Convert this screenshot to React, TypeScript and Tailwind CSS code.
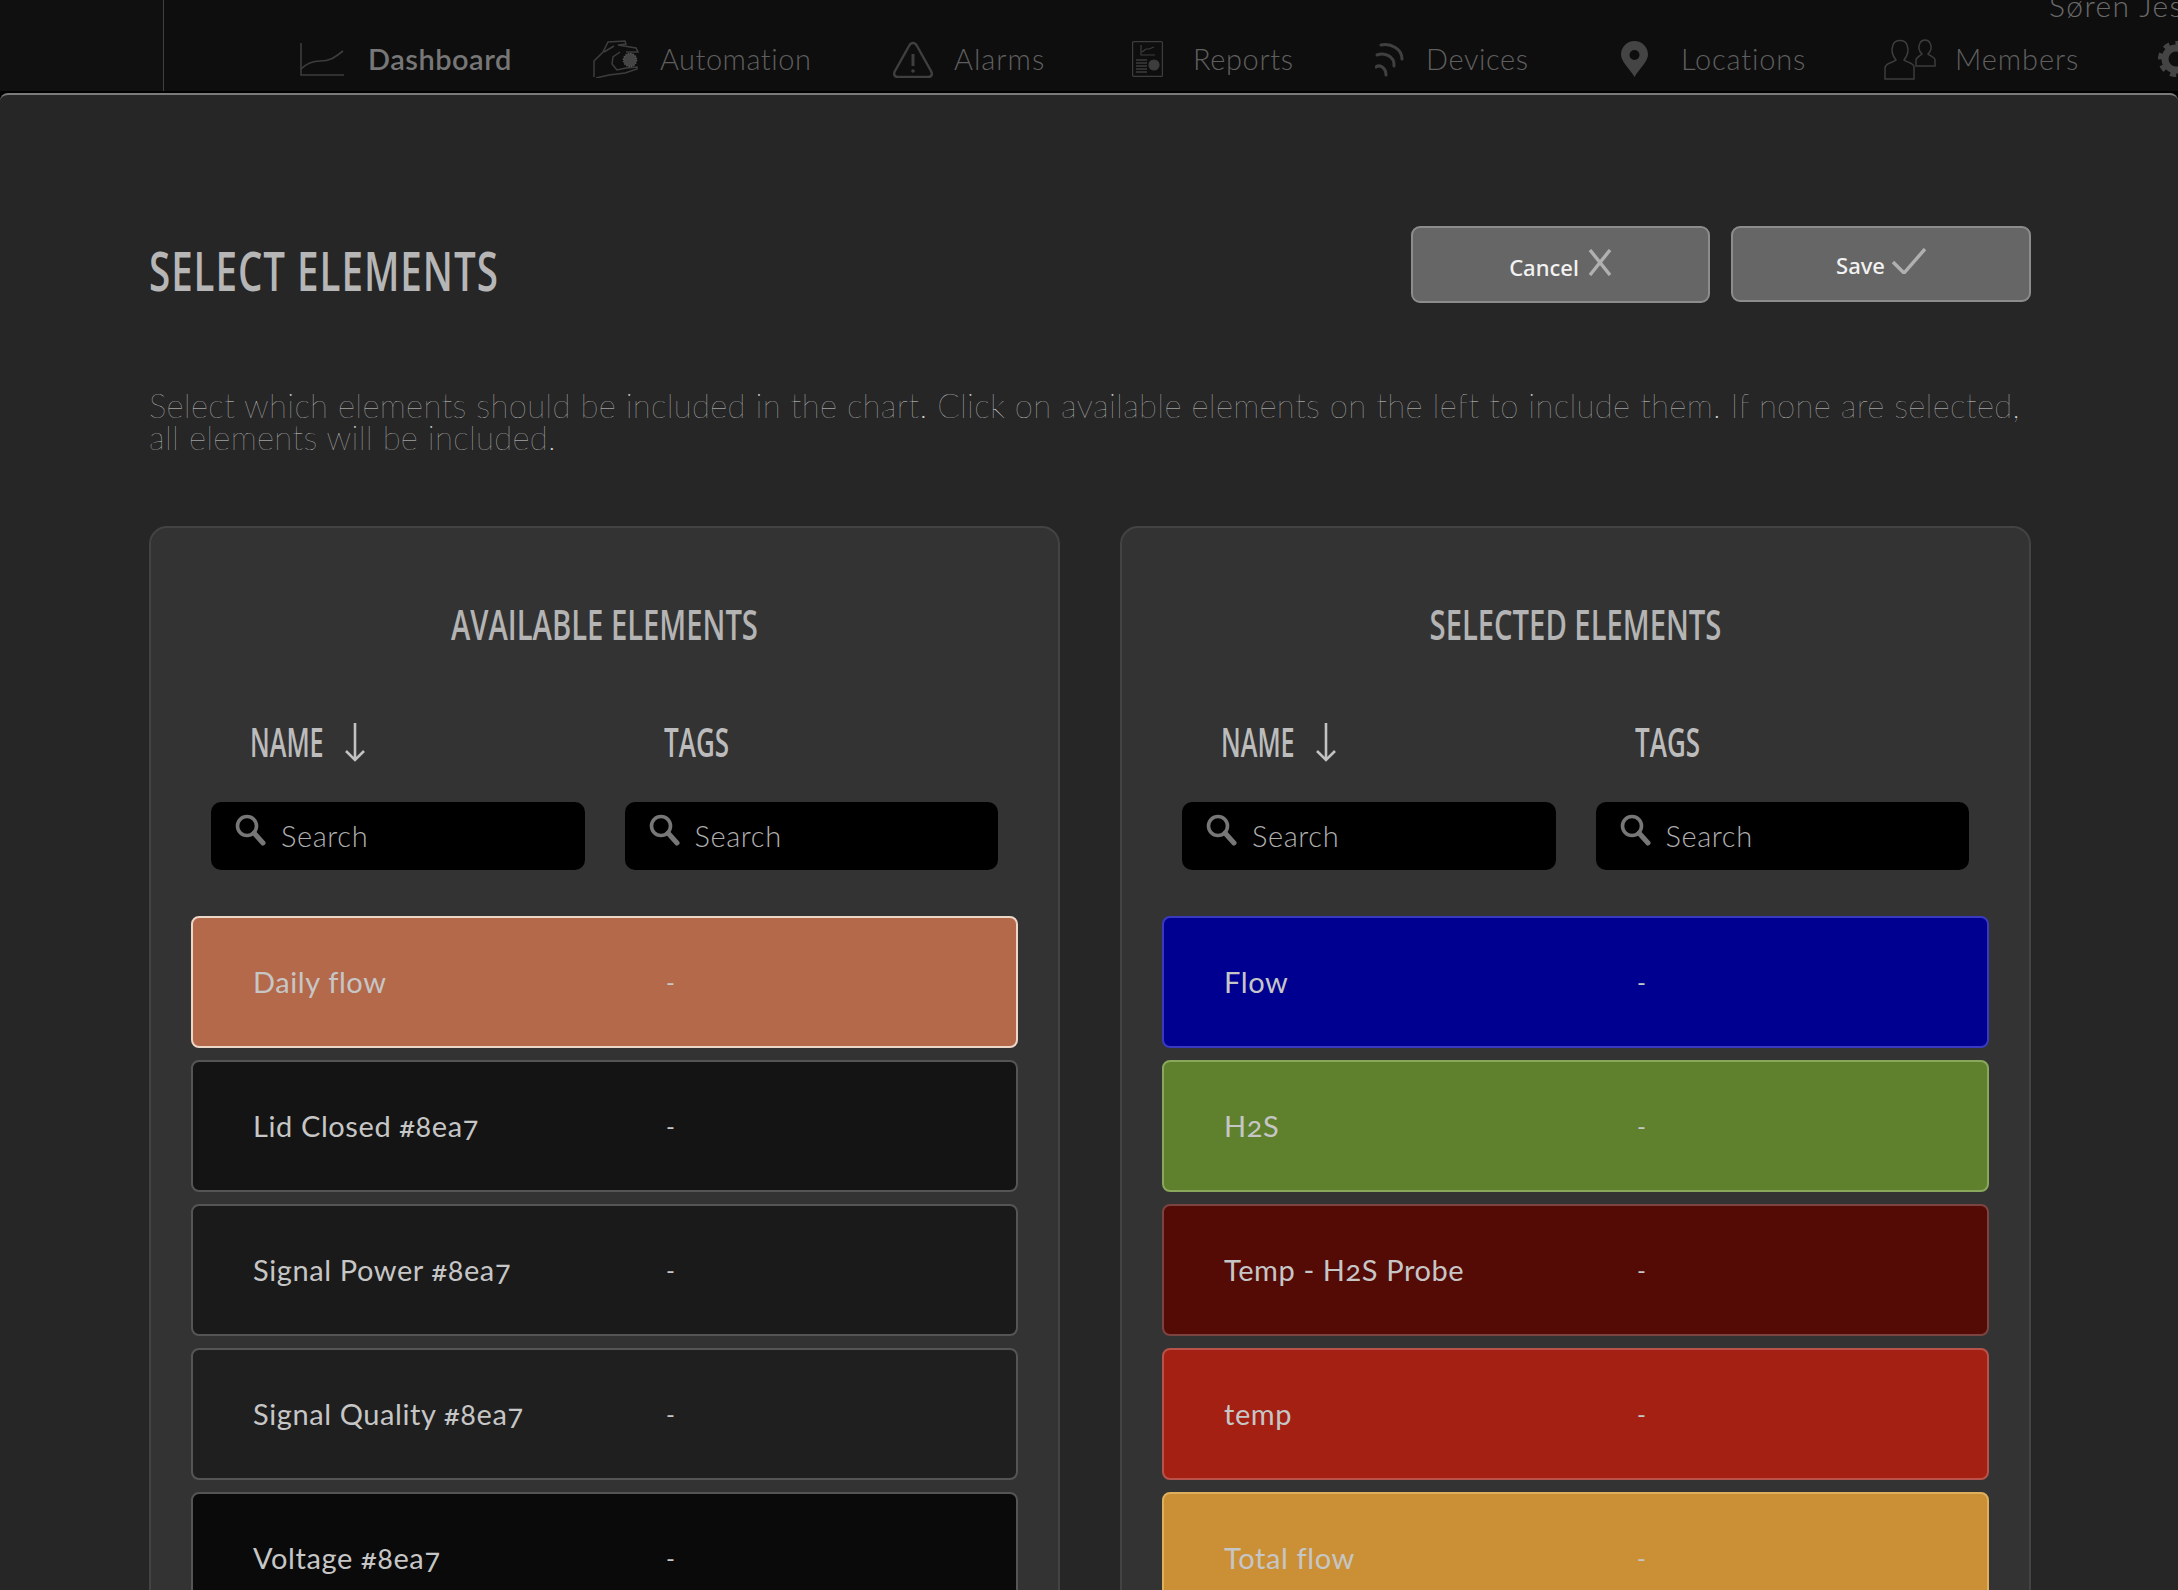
import React from "react";

function DashIcon() {
  return (
    <svg width="44" height="33" viewBox="0 0 44 33" fill="none" stroke="#3d3d3d" strokeWidth="1.6">
      <path d="M1 0V32H44" />
      <path d="M1 26C6 21 13 18 20 18C31 18 35 14 43 8" />
    </svg>
  );
}
function AutoIcon() {
  return (
    <svg width="48" height="38" viewBox="0 0 48 38" fill="none" stroke="#3d3d3d" strokeWidth="1.5">
      <path d="M1 37V21L10 12L15 2L32 1L33 4L25 5L43 8L45 12L33 12" />
      <path d="M11 12L21 6M27 12L20 17L19 24L24 30L33 28L44 27V29L32 33L16 35L3 38" />
      <circle cx="37" cy="20" r="6.5" fill="#444" stroke="#555" strokeDasharray="1.5 1" />
    </svg>
  );
}
function AlarmIcon() {
  return (
    <svg width="40" height="37" viewBox="0 0 40 37" fill="none" stroke="#3f3f3f" strokeWidth="2.4" strokeLinejoin="round">
      <path d="M20 2C18 2 17 3 16 5L2 30C0 34 2 36 5 36H35C38 36 40 34 38 30L24 5C23 3 22 2 20 2Z" />
      <path d="M20 13V25" strokeWidth="3" />
      <circle cx="20" cy="30" r="1.8" fill="#3f3f3f" stroke="none" />
    </svg>
  );
}
function ReportIcon() {
  return (
    <svg width="31" height="36" viewBox="0 0 31 36" fill="none" stroke="#3d3d3d" strokeWidth="1.2">
      <rect x="0.6" y="0.6" width="29.8" height="34.8" rx="1" />
      <path d="M9 4V14H23M10 11L14 8H17L22 6" />
      <path d="M4 19H15M4 22H15M4 25H15M4 28H15M4 31H15" strokeWidth="1.4" />
      <circle cx="22" cy="24" r="5" fill="#3d3d3d" />
    </svg>
  );
}
function WifiIcon() {
  return (
    <svg width="29" height="35" viewBox="0 0 29 35" fill="none" stroke="#404040" strokeWidth="3" strokeLinecap="round">
      <path d="M6 3C16 1 27 7 27 17" />
      <path d="M2 13C9 10 20 14 19 24" />
      <path d="M1 25C5 22 11 26 11 33" />
    </svg>
  );
}
function PinIcon() {
  return (
    <svg width="27" height="36" viewBox="0 0 27 36">
      <path fillRule="evenodd" fill="#444" d="M13.5 0C6 0 0 6 0 13.5C0 21 9 28 13.5 36C18 28 27 21 27 13.5C27 6 21 0 13.5 0ZM13.5 9A5 5 0 1 1 13.5 19A5 5 0 1 1 13.5 9Z" />
    </svg>
  );
}
function MembersIcon() {
  return (
    <svg width="52" height="41" viewBox="0 0 52 41" fill="none" stroke="#3d3d3d" strokeWidth="1.5">
      <path d="M1 40H30V28C30 24 22 23 20 21C24 16 25 11 23 6C21 0 11 0 9 6C7 11 8 16 12 21C9 24 1 24 1 29Z" />
      <path d="M32 27H51V21C51 18 46 17 44 15C47 12 48 8 46 4C44 0 38 0 36 4C34 8 35 12 38 15C36 17 32 18 32 21Z" />
    </svg>
  );
}
function GearIcon() {
  return (
    <svg width="36" height="36" viewBox="0 0 36 36" fill="none" stroke="#444" className="shrink-0">
      <circle cx="18" cy="18" r="11" strokeWidth="7" />
      <circle cx="18" cy="18" r="15.5" strokeWidth="5" strokeDasharray="6 6" />
    </svg>
  );
}

const nav = [
  { t: "Dashboard", I: DashIcon, w: "w-[293px]", o: "w-[68px]", c: "text-[#777777] font-semibold" },
  { t: "Automation", I: AutoIcon, w: "w-[300px]", o: "w-[67px]", c: "text-[#5f5f5f] font-light tracking-[0.5px]" },
  { t: "Alarms", I: AlarmIcon, w: "w-[239px]", o: "w-[61px]", c: "text-[#5f5f5f] font-light tracking-[1px]" },
  { t: "Reports", I: ReportIcon, w: "w-[243px]", o: "w-[61px]", c: "text-[#5f5f5f] font-light tracking-[0.6px]" },
  { t: "Devices", I: WifiIcon, w: "w-[246px]", o: "w-[51px]", c: "text-[#5f5f5f] font-light tracking-[0.6px]" },
  { t: "Locations", I: PinIcon, w: "w-[263px]", o: "w-[60px]", c: "text-[#5f5f5f] font-light tracking-[0.8px]" },
  { t: "Members", I: MembersIcon, w: "w-[274px]", o: "w-[71px]", c: "text-[#5f5f5f] font-light tracking-[0.9px]" },
];

function Mag() {
  return (
    <svg width="31" height="32" viewBox="0 0 31 32" fill="none" stroke="#777777" className="shrink-0">
      <circle cx="12" cy="12" r="9.5" strokeWidth="3.6" />
      <path d="M19 19L28 29" strokeWidth="5" strokeLinecap="round" />
    </svg>
  );
}

function Arrow() {
  return (
    <svg width="20" height="39" viewBox="0 0 20 39" fill="none" stroke="#c2c2c2" strokeWidth="2.6">
      <path d="M10 0V36" />
      <path d="M1 28L10 37L19 28" />
    </svg>
  );
}

function SearchBox() {
  return (
    <div className="flex h-[68px] items-start gap-[15px] rounded-[10px] bg-black pl-[24px] pt-[12px]">
      <Mag />
      <span className="mt-[4px] font-['Lato'] text-[29px] leading-[36px] font-light tracking-[0.6px] text-[#b0b0b0]">Search</span>
    </div>
  );
}

type R = { n: string; bg: string };

function Panel({ title, rows }: { title: string; rows: R[] }) {
  return (
    <div className="rounded-[18px] border-2 border-[#434343] bg-[#333333] px-[40px] pt-[73px]">
      <h2 className="origin-center scale-x-[0.695] text-center font-['Open_Sans'] text-[42px] leading-[46px] font-semibold text-[#b4b4b4] uppercase">{title}</h2>
      <div className="mx-[20px] mt-[73px] grid grid-cols-2 gap-x-[40px]">
        <div className="flex h-[44px] items-center gap-[22px] pl-[39px]">
          <span className="w-[73px] origin-left scale-x-[0.63] font-['Open_Sans'] text-[40px] font-semibold text-[#bcbcbc]">NAME</span>
          <Arrow />
        </div>
        <div className="flex h-[44px] items-center pl-[39px]">
          <span className="origin-left scale-x-[0.65] font-['Open_Sans'] text-[40px] font-semibold text-[#bcbcbc]">TAGS</span>
        </div>
        <div className="mt-[38px]"><SearchBox /></div>
        <div className="mt-[38px]"><SearchBox /></div>
      </div>
      <div className="mt-[46px] flex flex-col gap-[12px]">
        {rows.map((r) => (
          <div key={r.n} className={`flex h-[132px] items-center rounded-[8px] border-2 pl-[60px] font-['Lato'] text-[29px] font-normal text-[#c6c6c6] oldstyle-nums ${r.bg}`}>
            <span className="w-[413px] tracking-[0.6px]">{r.n}</span>
            <span className="text-[24px]">-</span>
          </div>
        ))}
      </div>
    </div>
  );
}

const left: R[] = [
  { n: "Daily flow", bg: "bg-[#b4694b] border-[#ecd6c8]" },
  { n: "Lid Closed #8ea7", bg: "bg-[#141414] border-[#555555]" },
  { n: "Signal Power #8ea7", bg: "bg-[#1a1a1a] border-[#555555]" },
  { n: "Signal Quality #8ea7", bg: "bg-[#1f1f1f] border-[#555555]" },
  { n: "Voltage #8ea7", bg: "bg-[#0a0a0a] border-[#555555]" },
];
const right: R[] = [
  { n: "Flow", bg: "bg-[#000090] border-[#3a3ac0]" },
  { n: "H2S", bg: "bg-[#5f812d] border-[#8aa85c]" },
  { n: "Temp - H2S Probe", bg: "bg-[#540a05] border-[#7c4440]" },
  { n: "temp", bg: "bg-[#a32013] border-[#b8524a]" },
  { n: "Total flow", bg: "bg-[#cb9036] border-[#deb05c]" },
];

export default function App() {
  return (
    <div className="h-[1590px] w-[2178px] overflow-hidden bg-black">
      <header className="flex h-[91px] bg-[#0e0e0e]">
        <div className="h-full w-[164px] shrink-0 border-r border-[#3f3f3f] bg-[#101010]" />
        <div className="min-w-0 flex-1 overflow-hidden">
          <div className="-mt-[12px] pl-[1885px] font-['Lato'] text-[30px] leading-[34px] font-light tracking-[1.4px] whitespace-nowrap text-[#6a6a6a]">Søren Jespersen</div>
          <nav className="mt-[16px] flex h-[42px] items-center pl-[136px] font-['Lato'] text-[29px] tracking-[0.5px] whitespace-nowrap">
            {nav.map(({ t, I, w, o, c }) => (
              <div key={t} className={`flex shrink-0 items-center ${w}`}>
                <div className={`flex shrink-0 items-center ${o}`}><I /></div>
                <span className={c}>{t}</span>
              </div>
            ))}
            <GearIcon />
          </nav>
        </div>
      </header>
      <main className="mt-[2px] h-[1497px] overflow-hidden rounded-t-[8px] border-t-2 border-[#7a7a7a] bg-[#262626] pt-[131px] pl-[149px] pr-[147px]">
        <div className="flex items-start justify-between">
          <h1 className="mt-[13px] origin-left scale-x-[0.7] font-['Open_Sans'] text-[55px] leading-[62px] font-semibold tracking-[1.4px] whitespace-nowrap text-[#b6b6b6]">SELECT ELEMENTS</h1>
          <div className="flex items-start gap-[21px] font-['Noto_Sans'] text-[22px] font-medium text-[#f2f2f2]">
            <button className="flex h-[77px] w-[299px] items-center justify-center gap-[9px] rounded-[9px] border-2 border-[#8c8c8c] bg-[#666666]">
              <span className="mt-[6px]">Cancel</span>
              <svg width="24" height="27" viewBox="0 0 24 27" fill="none" stroke="#b0b0b0" strokeWidth="3.4" className="-mt-[5px]"><path d="M2 1L22 26M22 1L2 26" /></svg>
            </button>
            <button className="flex h-[76px] w-[300px] items-center justify-center gap-[7px] rounded-[9px] border-2 border-[#8c8c8c] bg-[#666666]">
              <span className="mt-[3px]">Save</span>
              <svg width="34" height="26" viewBox="0 0 34 26" fill="none" stroke="#b0b0b0" strokeWidth="3.4" className="-mt-[6px]"><path d="M1 14L12 25L33 1" /></svg>
            </button>
          </div>
        </div>
        <p className="mt-[86px] font-['Lato'] text-[33px] leading-[32px] font-thin tracking-[0.29px] text-[#d4d4d4]">
          Select which elements should be included in the chart. Click on available elements on the left to include them. If none are selected, all elements will be included.
        </p>
        <div className="mt-[73px] grid grid-cols-2 gap-x-[60px]">
          <Panel title="Available elements" rows={left} />
          <Panel title="Selected elements" rows={right} />
        </div>
      </main>
    </div>
  );
}
